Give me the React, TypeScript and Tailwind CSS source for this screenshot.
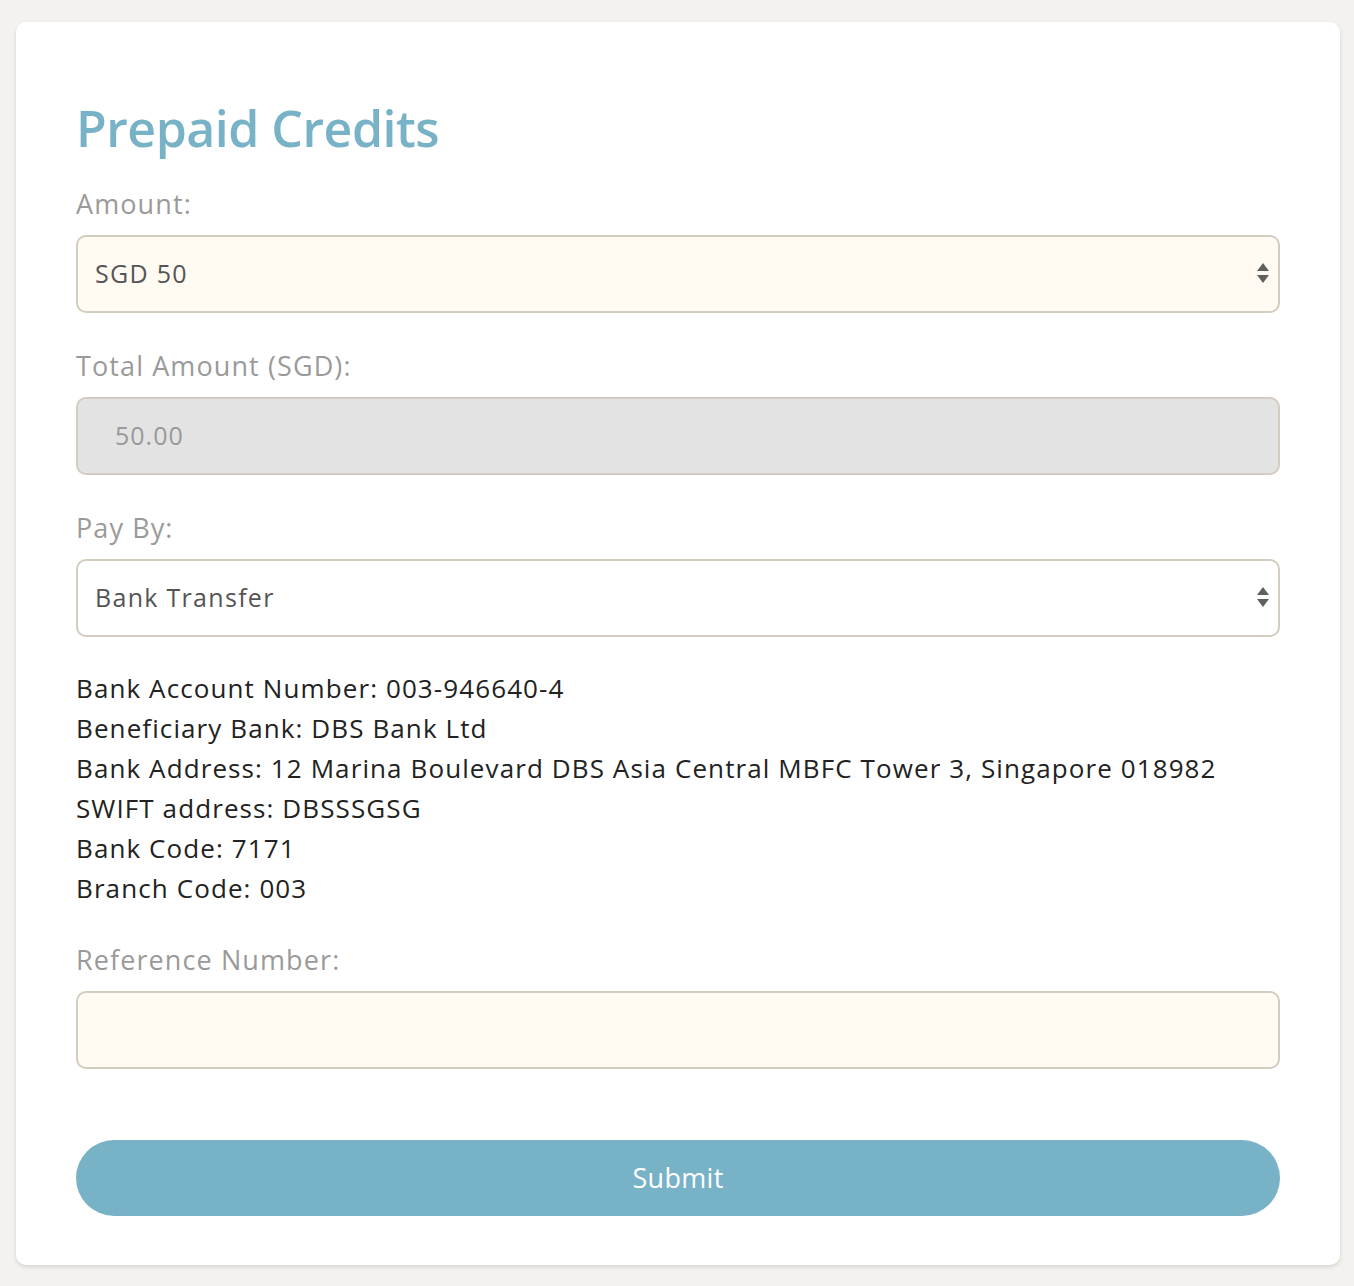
import React from "react";

const Arrows = () => (
  <svg width="14" height="26" viewBox="0 0 14 26" className="absolute right-[8px] top-1/2 -translate-y-1/2">
    <path d="M7 2 L13 10 H1 Z" fill="#5f5f5f" />
    <path d="M1 14 H13 L7 22 Z" fill="#5f5f5f" />
  </svg>
);

const Label: React.FC<{ children: React.ReactNode }> = ({ children }) => (
  <div className="text-[27px] leading-[36px] text-[#9a9a9a] mb-[13px] tracking-[1.1px]">{children}</div>
);

const SelectBox: React.FC<{ value: string; bg: string }> = ({ value, bg }) => (
  <div
    className={`relative h-[78px] rounded-[10px] border-2 border-[#d3cdc0] flex items-center pl-[17px] text-[25px] text-[#555] tracking-[1.3px] ${bg}`}
  >
    {value}
    <Arrows />
  </div>
);

export default function App() {
  const bankLines = [
    "Bank Account Number: 003-946640-4",
    "Beneficiary Bank: DBS Bank Ltd",
    "Bank Address: 12 Marina Boulevard DBS Asia Central MBFC Tower 3, Singapore 018982",
    "SWIFT address: DBSSSGSG",
    "Bank Code: 7171",
    "Branch Code: 003",
  ];

  return (
    <div
      className="min-h-[1286px] bg-[#f3f2ee] pt-[22px] pl-[16px] pr-[14px] pb-[21px]"
      style={{ fontFamily: "'Open Sans', 'Noto Sans', sans-serif" }}
    >
      <div className="bg-white rounded-[10px] shadow-[0_2px_4px_rgba(0,0,0,0.12)] pt-[74px] pb-[49px] px-[60px]">
        <h1 className="text-[50px] leading-[65px] font-semibold text-[#78b2c7] mb-[25px] tracking-[-0.5px]">
          Prepaid Credits
        </h1>

        <Label>Amount:</Label>
        <SelectBox value="SGD 50" bg="bg-[#fffbf3]" />

        <div className="mt-[35px]">
          <Label>Total Amount (SGD):</Label>
          <div className="h-[78px] rounded-[10px] border-2 border-[#d3cdc0] bg-[#e3e3e3] flex items-center pl-[37px] text-[25px] text-[#999] tracking-[1px]">
            50.00
          </div>
        </div>

        <div className="mt-[35px]">
          <Label>Pay By:</Label>
          <SelectBox value="Bank Transfer" bg="bg-white" />
        </div>

        <div className="mt-[31px] text-[26px] leading-[40px] text-[#222] tracking-[1.1px]">
          {bankLines.map((l) => (
            <div key={l}>{l}</div>
          ))}
        </div>

        <div className="mt-[34px]">
          <Label>Reference Number:</Label>
          <div className="h-[78px] rounded-[10px] border-2 border-[#d3cdc0] bg-[#fffbf3]" />
        </div>

        <button className="mt-[71px] w-full h-[76px] rounded-full bg-[#78b2c7] text-white text-[27px] tracking-[0.3px]">
          Submit
        </button>
      </div>
    </div>
  );
}
